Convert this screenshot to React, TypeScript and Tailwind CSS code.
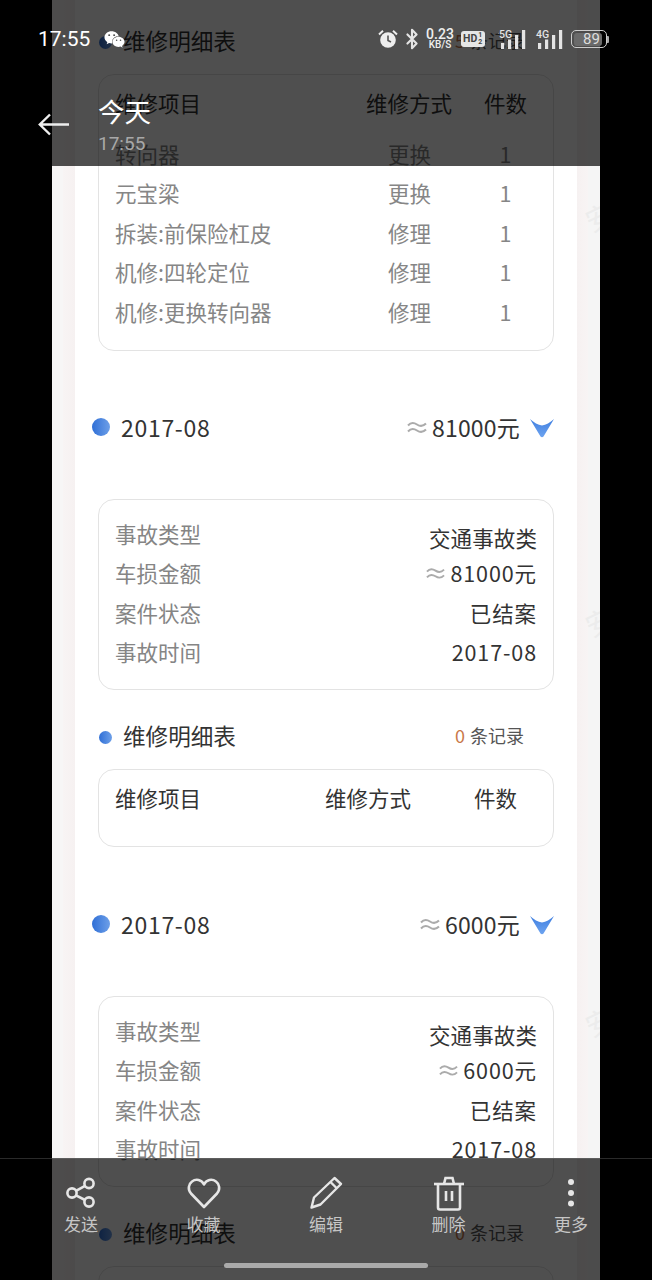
import { Bluetooth } from "lucide-react";
import { FaWeixin } from "react-icons/fa";

const CJK = "font-['Noto_Sans_CJK_SC','Noto_Sans',sans-serif]";

const firstItems = [
  ["转向器", "更换", "1"],
  ["元宝梁", "更换", "1"],
  ["拆装:前保险杠皮", "修理", "1"],
  ["机修:四轮定位", "修理", "1"],
  ["机修:更换转向器", "修理", "1"],
];

function Approx({ small }: { small?: boolean }) {
  return (
    <svg width={small ? 19 : 20} height="14" viewBox="0 0 20 14" fill="none" stroke="#ababab" strokeWidth="2">
      <path d="M1 5.500c3-3.500 6-3 9-1s6 2 9-1" />
      <path d="M1 11.500c3-3.500 6-3 9-1s6 2 9-1" />
    </svg>
  );
}

function Chevron() {
  return (
    <svg width="24" height="20" viewBox="0 0 24 20">
      <defs>
        <linearGradient id="chev" x1="0" y1="0" x2="0" y2="1">
          <stop offset="0" stopColor="#3f7fe0" />
          <stop offset="1" stopColor="#6ea4f0" />
        </linearGradient>
      </defs>
      <path d="M0 1Q6 6.500 12 7.500Q18 6.500 24 1L13.500 18.500Q12 20 10.500 18.500Z" fill="url(#chev)" />
    </svg>
  );
}

function SubHeader({ count }: { count: string }) {
  return (
    <div className="h-[40px] mb-[12px] pl-[24px] pr-[53px] flex items-center">
      <div className="w-[13px] h-[13px] rounded-full bg-gradient-to-r from-[#2f6fd6] to-[#6d9fe8]" />
      <div className="ml-[11px] mb-[2px] text-[22.600px] text-[#333333]">维修明细表</div>
      <div className="ml-auto mb-[4px] flex items-center text-[18px] text-[#555555]">
        <span className="text-[#c9784a] mr-[5px]">{count}</span>
        条记录
      </div>
    </div>
  );
}

function RecordHeader({ amount }: { amount: string }) {
  return (
    <div className="h-[40px] pl-[17px] pr-[23px] flex items-center">
      <div className="w-[18px] h-[18px] rounded-full bg-gradient-to-r from-[#2f6fd6] to-[#6d9fe8] -mt-[2px]" />
      <div className="ml-[11px] mb-[2px] text-[23px] tracking-[0.7px] text-[#333333]">2017-08</div>
      <div className="ml-auto mb-[2px] flex items-center gap-[5px] text-[23px] tracking-[0.2px] text-[#333333]">
        <Approx />
        <span>{amount}</span>
      </div>
      <div className="ml-[10px]">
        <Chevron />
      </div>
    </div>
  );
}

function InfoCard({ amount }: { amount: string }) {
  const rows = [
    ["车损金额", amount],
    ["案件状态", "已结案"],
    ["事故时间", "2017-08"],
  ];
  return (
    <div className="mx-[23px] h-[191px] border-[1.500px] border-[#e3e3e3] rounded-[16px] pt-[14px] pl-[16px] pr-[16px] text-[21.500px]">
      <div className="h-[39.500px] flex items-center justify-between">
        <span className="text-[#858585]">事故类型</span>
        <span className="text-[#333333] mt-[8px] tracking-[0.1px]">交通事故类</span>
      </div>
      {rows.map(([label, value]) => (
        <div key={label} className="h-[39.500px] flex items-center justify-between">
          <span className="text-[#858585]">{label}</span>
          <span className="text-[#333333] tracking-[0.9px] flex items-center gap-[5px]">
            {label === "车损金额" && <Approx small />}
            {value}
          </span>
        </div>
      ))}
    </div>
  );
}

function Watermark({ top }: { top: string }) {
  return (
    <div className={`absolute ${top} left-[533px] text-[28px] text-[#ececec] rotate-[-25deg]`}>安</div>
  );
}

function StatusSignal({ label, arrows }: { label: string; arrows?: boolean }) {
  return (
    <svg width="28" height="20" viewBox="0 0 28 20" fill="#e4e4e4">
      {arrows && <path d="M-3 5l2-3 2 3z" fill="#8a8a8a" />}
      <text x="1" y="8.500" fontSize="10.500" fontFamily="Roboto, sans-serif" fontWeight="500">
        {label}
      </text>
      <rect x="3" y="14" width="3.200" height="6" />
      <rect x="10" y="10.500" width="3.200" height="9.500" />
      <rect x="17" y="6" width="3.200" height="14" />
      <rect x="24" y="1" width="3.200" height="19" />
    </svg>
  );
}

function StatusBar() {
  return (
    <div className="absolute top-[27px] left-0 w-[652px] pl-[38px] pr-[43px] h-[24px] flex items-center text-white font-['Roboto',sans-serif]">
      <div className="text-[21px] leading-none w-[53px]">17:55</div>
      <FaWeixin className="ml-[13px] text-white" size={21} />
      <div className="ml-auto flex items-center">
        <svg width="20" height="20" viewBox="0 0 20 20">
          <circle cx="10" cy="11" r="7.800" fill="#eeeeee" />
          <path d="M10 6.500V11.500L13 13" stroke="#555555" strokeWidth="1.600" fill="none" />
          <path d="M1 5.500L5 1.800M19 5.500L15 1.800" stroke="#eeeeee" strokeWidth="2" />
        </svg>
        <Bluetooth className="ml-[3px] text-[#e4e4e4]" size={22} strokeWidth={2.300} />
        <div className="ml-[2px] w-[30px] flex flex-col items-center text-[#eeeeee] font-medium">
          <span className="text-[14px] leading-[12px]">0.23</span>
          <span className="text-[10px] leading-[10px]">KB/S</span>
        </div>
        <div className="ml-[6px] w-[24px] h-[16px] rounded-[3px] bg-[#e6e6e6] flex items-center pl-[2px] text-[#444444] text-[10.500px] font-bold leading-none">
          HD
          <span className="flex flex-col text-[7px] leading-[7px] ml-[1px]">
            <span>1</span>
            <span>2</span>
          </span>
        </div>
        <div className="ml-[13px]">
          <StatusSignal label="5G" arrows />
        </div>
        <div className="ml-[9px]">
          <StatusSignal label="4G" />
        </div>
        <div className="ml-[8px] flex items-center">
          <div className="w-[36px] h-[18px] rounded-[5px] border border-[#cccccc] p-[1.500px]">
            <div className="w-[28px] h-full rounded-[3px] bg-[#6a6a6a] flex items-center justify-center text-[15px] leading-none text-[#dddddd] pl-[8px]">
              89
            </div>
          </div>
          <div className="w-[2px] h-[7px] bg-[#aaaaaa] rounded-r-[1px]" />
        </div>
      </div>
    </div>
  );
}

function BottomItem({ label, children }: { label: string; children: React.ReactNode }) {
  return (
    <div className="w-[58px] flex flex-col items-center">
      <div className="h-[36px] w-[36px] flex items-center justify-center">{children}</div>
      <div className="mt-[1px] text-[17px] leading-[24px] text-[#c6c6c6]">{label}</div>
    </div>
  );
}

function BottomBar() {
  return (
    <div className="absolute left-0 top-[1158px] w-full h-[122px] bg-black/[0.69] border-t border-[#5e5e5e] pt-[16px]">
      <div className="flex justify-between">
        <BottomItem label="发送">
          <svg width="34" height="34" viewBox="0 0 34 34" fill="none" stroke="#e6e6e6" strokeWidth="2.600">
            <circle cx="25" cy="7.500" r="4.600" />
            <circle cx="8" cy="17" r="4.600" />
            <circle cx="25" cy="26" r="4.600" />
            <path d="M12 14.800L21 9.800M12 19.300L21 24" />
          </svg>
        </BottomItem>
        <BottomItem label="收藏">
          <svg width="34" height="32" viewBox="0 0 34 32" fill="none" stroke="#e6e6e6" strokeWidth="2.600" strokeLinejoin="round">
            <path d="M17 30L4 16.500C0.500 12.500 1.500 7 5 4.500C9 1.500 14.500 2.500 17 7.500C19.500 2.500 25 1.500 29 4.500C32.500 7 33.500 12.500 30 16.500Z" />
          </svg>
        </BottomItem>
        <BottomItem label="编辑">
          <svg width="34" height="34" viewBox="0 0 34 34" fill="none" stroke="#e6e6e6" strokeWidth="2.400" strokeLinejoin="round">
            <path d="M2.500 31.500L5 21.500L25.500 2L32 8L11.500 28.500Z" />
            <path d="M21.500 6L28 12.500" />
          </svg>
        </BottomItem>
        <BottomItem label="删除">
          <svg width="32" height="35" viewBox="0 0 32 35" fill="none" stroke="#e6e6e6" strokeWidth="2.600">
            <path d="M1 8H31" />
            <path d="M11 8L12.500 2H19.500L21 8" />
            <path d="M5 8V31.500Q5 33.500 7 33.500H25Q27 33.500 27 31.500V8" />
            <path d="M13 15V25M19 15V25" />
          </svg>
        </BottomItem>
        <BottomItem label="更多">
          <svg width="8" height="32" viewBox="0 0 8 32" fill="#e6e6e6">
            <circle cx="4" cy="5" r="3" />
            <circle cx="4" cy="16" r="3" />
            <circle cx="4" cy="26.500" r="3" />
          </svg>
        </BottomItem>
      </div>
      <div className="w-[204px] h-[5px] rounded-full bg-[#aaaaaa] mx-auto mt-[27px]" />
    </div>
  );
}

function TopBar() {
  return (
    <div className="absolute left-0 top-0 w-full h-[166px] bg-black/[0.69] pl-[46px] pt-[94px]">
      <div className="text-[26.500px] leading-[34px] text-white">今天</div>
      <div className="mt-[5px] text-[19px] leading-[22px] text-[#a8a8a8] font-['Roboto',sans-serif]">17:55</div>
    </div>
  );
}

export default function App() {
  return (
    <div className={`relative w-[652px] h-[1280px] bg-black overflow-hidden flex justify-center ${CJK}`}>
      <div className="relative w-[548px] h-full flex overflow-hidden bg-[#f5f5f5]">
        {/* side strips */}
        <div className="w-[23px] flex shrink-0">
          <div className="w-[11px] bg-[#f7f6f6]" />
          <div className="w-[12px] bg-gradient-to-r from-[#f8f4f4] to-[#f6f1f1]" />
        </div>

        <div className="w-[502px] shrink-0 bg-white h-full">
          <div className="pt-[22px]">
            <SubHeader count="5" />
            <div className="mx-[23px] h-[277px] border-[1.500px] border-[#e3e3e3] rounded-[16px] pt-[8px] px-[16px] text-[21.500px]">
              <div className="h-[40px] grid grid-cols-[251px_87px_31px_43px] items-center text-[#333333]">
                <span>维修项目</span>
                <span>维修方式</span>
                <span />
                <span>件数</span>
              </div>
              <div className="mt-[11px]">
                {firstItems.map(([name, way, n]) => (
                  <div key={name} className="h-[39.500px] grid grid-cols-[251px_87px_31px_43px] items-center text-[#868686]">
                    <span>{name}</span>
                    <span className="text-center">{way}</span>
                    <span />
                    <span className="text-center">{n}</span>
                  </div>
                ))}
              </div>
            </div>

            <div className="mt-[57px] mb-[51px]">
              <RecordHeader amount="81000元" />
            </div>
            <InfoCard amount="81000元" />
            <div className="mt-[27px]">
              <SubHeader count="0" />
            </div>
            <div className="mx-[23px] h-[78px] border-[1.500px] border-[#e3e3e3] rounded-[16px] pt-[8px] px-[16px] text-[21.500px] text-[#333333]">
              <div className="h-[40px] grid grid-cols-[210px_87px_62px_43px] items-center">
                <span>维修项目</span>
                <span>维修方式</span>
                <span />
                <span>件数</span>
              </div>
            </div>

            <div className="mt-[58px] mb-[51px]">
              <RecordHeader amount="6000元" />
            </div>
            <InfoCard amount="6000元" />
            <div className="mt-[27px]">
              <SubHeader count="0" />
            </div>
            <div className="mx-[23px] h-[78px] border-[1.500px] border-[#e3e3e3] rounded-[16px]" />
          </div>
        </div>

        <div className="w-[23px] flex shrink-0">
          <div className="w-[11px] bg-gradient-to-r from-[#f6f1f1] to-[#f8f4f4]" />
          <div className="w-[12px] bg-[#f5f5f5]" />
        </div>

        <Watermark top="top-[195px]" />
        <Watermark top="top-[600px]" />
        <Watermark top="top-[1000px]" />

        <TopBar />
        <BottomBar />
      </div>

      {/* faint system line over the black margins */}
      <div className="absolute left-0 top-[1158px] w-[52px] h-px bg-[#2a2a2a]" />
      <div className="absolute right-0 top-[1158px] w-[52px] h-px bg-[#2a2a2a]" />

      <StatusBar />
      {/* back arrow */}
      <svg className="absolute left-[38px] top-[113px]" width="32" height="24" viewBox="0 0 32 24" fill="none" stroke="#eeeeee" strokeWidth="2.400">
        <path d="M31 11.500H2M12 1.500L1.800 11.500L12 21.500" />
      </svg>
    </div>
  );
}
